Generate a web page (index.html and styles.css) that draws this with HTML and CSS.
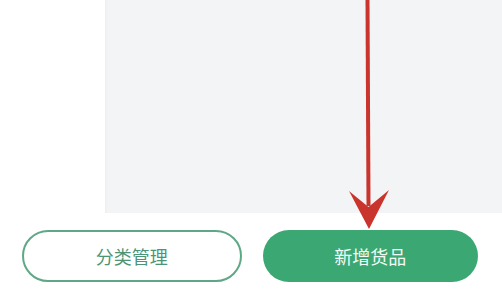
FILE: index.html
```html
<!DOCTYPE html>
<html lang="zh">
<head>
<meta charset="utf-8">
<link rel="stylesheet" href="styles.css">
</head>
<body>
<div class="page">
  <div class="top">
    <div class="side"></div>
    <div class="panel"></div>
  </div>
  <div class="actions">
    <button class="btn btn-outline">分类管理</button>
    <button class="btn btn-fill">新增货品</button>
  </div>
  <svg class="arrow" width="502" height="240" viewBox="0 0 502 240">
    <path d="M365.5 0 L369.5 0 L370.5 206 L366.5 206 Z" fill="#c9352d"/>
    <path d="M349 191 L368.5 207 L389 190 L369 229 Z" fill="#c9352d"/>
  </svg>
</div>
</body>
</html>
```
FILE: styles.css
```css
html, body {
  margin: 0;
  padding: 0;
  background: #ffffff;
  font-family: "Noto Sans CJK SC", "Noto Sans", sans-serif;
}
.page {
  position: relative;
  width: 502px;
  height: 290px;
  overflow: hidden;
  display: flex;
  flex-direction: column;
}
.top {
  display: flex;
  height: 213px;
}
.side {
  width: 105px;
  background: #ffffff;
}
.panel {
  flex: 1;
  background: #f3f4f6;
  box-shadow: inset 3px 0 3px -2px rgba(0,0,0,0.03);
}
.actions {
  display: flex;
  gap: 21px;
  padding: 17px 24px 0 22px;
}
.btn {
  box-sizing: border-box;
  flex: 1 1 0;
  height: 52px;
  border-radius: 26px;
  font-family: "Noto Sans CJK SC", "Noto Sans", sans-serif;
  font-size: 18px;
  padding: 0;
  display: flex;
  align-items: center;
  justify-content: center;
}
.btn-outline {
  background: #ffffff;
  border: 2px solid #5fa887;
  color: #4d9475;
}
.btn-fill {
  background: #3ba874;
  border: none;
  color: #f2fbf5;
}
.arrow {
  position: absolute;
  left: 0;
  top: 0;
}
```
